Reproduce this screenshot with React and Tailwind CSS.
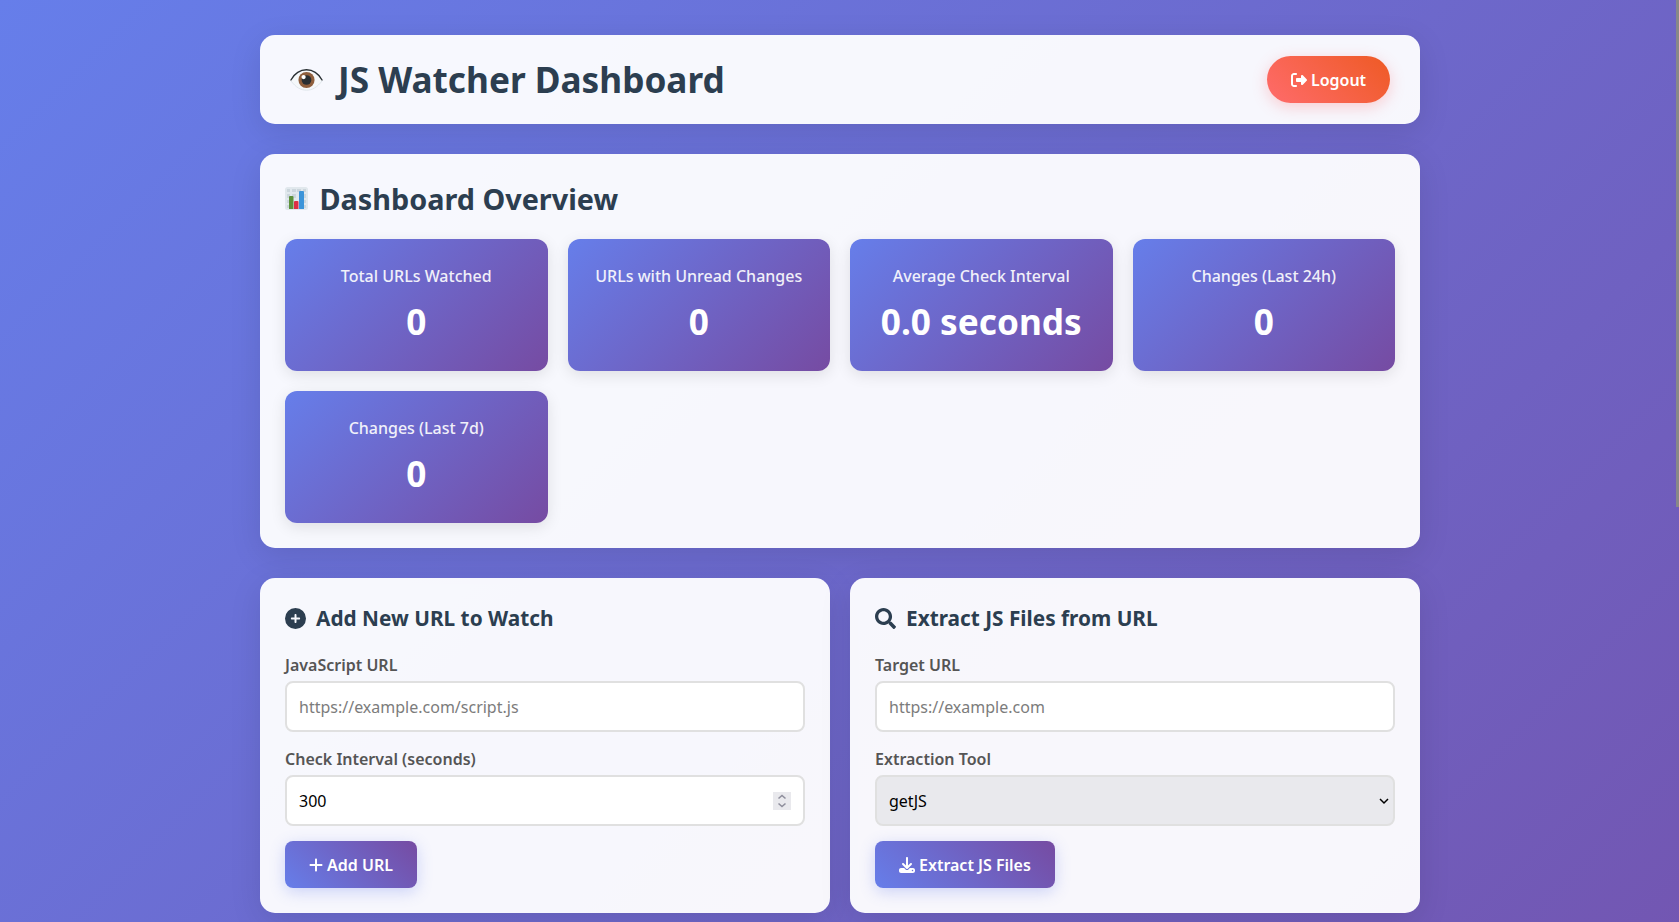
import { FaCirclePlus, FaDownload, FaPlus, FaRightFromBracket } from "react-icons/fa6";
import { FaSearch } from "react-icons/fa";

const stats = [
  ["Total URLs Watched", "0"],
  ["URLs with Unread Changes", "0"],
  ["Average Check Interval", "0.0 seconds"],
  ["Changes (Last 24h)", "0"],
  ["Changes (Last 7d)", "0"],
];

const CARD = "rounded-[15px] bg-white/95 shadow-[0_8px_32px_rgba(0,0,0,0.1)]";
const FIELD = "mt-[3px] flex h-[51px] w-full items-center rounded-lg border-2 border-[#e0e0e0] bg-white px-3 text-base leading-[22px] text-black outline-none placeholder:text-[#7c7c7c]";
const BUTTON = "mt-[15px] flex h-[47px] items-center self-start rounded-lg bg-[linear-gradient(45deg,#667eea,#764ba2)] px-6 text-base font-semibold text-white shadow-[0_4px_15px_rgba(102,126,234,0.3)]";
const LABEL = "block text-base leading-[25px] font-semibold text-[#555]";

function Eye() {
  return (
    <svg viewBox="0 0 36 36" className="h-[35px] w-[35px]">
      <path d="M2 18.500C7 10 12 7.500 18 7.500S30 10 34 18.500C30 25.500 24.500 29 18 29S6 25.500 2 18.500z" fill="#f5f8fa" />
      <path d="M2 19.500C7 26 12 29 18 29s11-3 16-9.500" fill="none" stroke="#dce4e9" strokeWidth="0.900" />
      <circle cx="18" cy="18.500" r="8.300" fill="#8f5f3d" />
      <circle cx="18" cy="18.500" r="5" fill="#292f33" />
      <circle cx="15" cy="15.500" r="2.200" fill="#fff" />
      <path d="M2 18.500C6 11.500 11.500 8 18 8s12 3.500 16 10.500" fill="none" stroke="#292f33" strokeWidth="1.400" strokeLinecap="round" />
    </svg>
  );
}

function BarChart() {
  return (
    <svg viewBox="0 0 23 23" className="-mt-[2px] -mr-[0.5px] h-[23px] w-[23px]">
      <rect width="23" height="23" rx="2.500" fill="#e1e8ed" />
      <path d="M2 2h3v3H2zM7 2h4v3H7zM12 2h4v3h-4zM18 2h3v3h-3zM2 7h3v4H2zM7 7h4v4H7zM18 7h3v4h-3zM2 13h3v3H2zM18 13h3v3h-3zM2 18h3v3H2zM18 18h3v3h-3z" fill="#ccd6dd" />
      <path d="M4 22V10q0-1 1-1h2.500q1 0 1 1v12z" fill="#5c913b" />
      <path d="M9 22v-7q0-1 1-1h2.500q1 0 1 1v7z" fill="#dd2e44" />
      <path d="M14 22V5q0-1 1-1h3q1 0 1 1v17z" fill="#3b94d9" />
    </svg>
  );
}

export default function App() {
  return (
    <div className="flex h-[922px] overflow-hidden bg-[linear-gradient(135deg,#667eea_0%,#764ba2_100%)] bg-[length:100%_1677px] bg-no-repeat pl-px font-['Noto_Sans',sans-serif]">
      <div className="mx-auto w-[1160px] pt-[35px]">
        <header className={`${CARD} flex h-[89px] items-center justify-between px-[30px]`}>
          <h1 className="-ml-[1.5px] flex items-center gap-[14.5px] text-[35.2px] leading-[49px] font-bold text-[#2c3e50]">
            <Eye />
            JS Watcher Dashboard
          </h1>
          <button className="flex h-[47px] w-[123px] items-center justify-center gap-1 rounded-full bg-[linear-gradient(45deg,#ff6b6b,#ee5a24)] text-base font-semibold text-white shadow-[0_4px_15px_rgba(255,107,107,0.3)]">
            <FaRightFromBracket className="size-4" />
            Logout
          </button>
        </header>

        <section className={`${CARD} mt-[30px] h-[394px] p-[25px]`}>
          <h2 className="flex h-10 items-center gap-3 text-[28.8px] leading-[40px] font-bold text-[#2c3e50]">
            <BarChart />
            Dashboard Overview
          </h2>
          <div className="mt-5 grid grid-cols-4 gap-5">
            {stats.map(([label, value]) => (
              <div key={label} className="flex h-[132px] flex-col items-center rounded-xl bg-[linear-gradient(135deg,#667eea_0%,#764ba2_100%)] pt-[25px] text-white shadow-[0_4px_15px_rgba(0,0,0,0.1)]">
                <h3 className="text-base leading-[25px] font-medium opacity-90">{label}</h3>
                <p className="mt-2 text-[35.2px] leading-[49px] font-bold">{value}</p>
              </div>
            ))}
          </div>
        </section>

        <div className="mt-[30px] grid grid-cols-2 gap-5">
          <section className={`${CARD} flex h-[335px] flex-col p-[25px]`}>
            <h2 className="flex h-[30px] items-center gap-[10px] text-[20.8px] leading-8 font-bold text-[#2c3e50]">
              <FaCirclePlus className="size-[21px]" />
              Add New URL to Watch
            </h2>
            <label className={`${LABEL} mt-5`}>JavaScript URL</label>
            <input className={FIELD} placeholder="https://example.com/script.js" />
            <label className={`${LABEL} mt-[15px]`}>Check Interval (seconds)</label>
            <div className={`${FIELD} justify-between`}>
              300
              <span className="flex h-[18px] w-[18px] items-center justify-center bg-[#e9e9ed]">
                <svg viewBox="0 0 18 18" className="size-[18px]" fill="none" stroke="#8f8f9d" strokeWidth="1.600">
                  <path d="M5.500 6.500 9 3.500l3.500 3M5.500 11.500 9 14.500l3.500-3" />
                </svg>
              </span>
            </div>
            <button className={`${BUTTON} w-[132px] gap-1`}>
              <FaPlus className="h-4 w-[14px]" />
              Add URL
            </button>
          </section>

          <section className={`${CARD} flex h-[335px] flex-col p-[25px]`}>
            <h2 className="flex h-[30px] items-center gap-[10px] text-[20.8px] leading-8 font-bold text-[#2c3e50]">
              <FaSearch className="size-[21px]" />
              Extract JS Files from URL
            </h2>
            <label className={`${LABEL} mt-5`}>Target URL</label>
            <input className={FIELD} placeholder="https://example.com" />
            <label className={`${LABEL} mt-[15px]`}>Extraction Tool</label>
            <div className="mt-[3px] flex h-[51px] items-center justify-between rounded-lg border-2 border-[#e0e0e0] bg-[#e9e9ed] pr-1 pl-3 text-base leading-[22px] text-black">
              getJS
              <svg viewBox="0 0 10 10" className="size-[10px]" fill="none" stroke="#000" strokeWidth="1.500">
                <path d="M1 3l4 4 4-4" />
              </svg>
            </div>
            <button className={`${BUTTON} w-[180px] gap-1`}>
              <FaDownload className="size-4" />
              Extract JS Files
            </button>
          </section>
        </div>
      </div>
      <div className="absolute top-0 right-0 h-[507px] w-[3px] bg-[#888888]" />
    </div>
  );
}
